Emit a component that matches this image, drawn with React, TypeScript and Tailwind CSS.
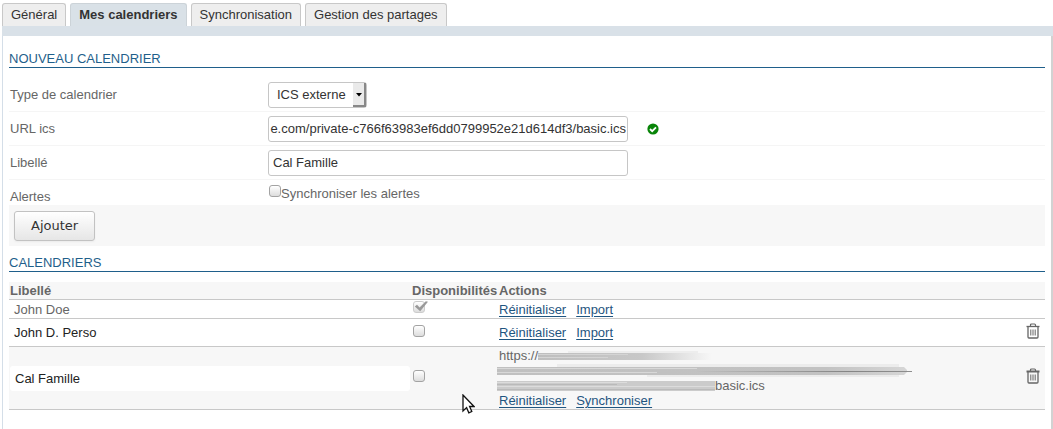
import type { ReactNode } from "react";

const tabs = ["Général", "Mes calendriers", "Synchronisation", "Gestion des partages"];

const fieldClass =
  "h-[26px] rounded-[3px] border border-[#c6c6c6] bg-white text-[13px] text-[#333] outline-none";

function SectionTitle({ children }: { children: ReactNode }) {
  return (
    <h2 className="h-[17px] border-b border-[#1f5f8b] text-[13px] leading-4 text-[#1f5f8b]">{children}</h2>
  );
}

function FormRow({ id, label, children }: { id: string; label: string; children: ReactNode }) {
  return (
    <div className="flex h-[34px] items-center border-b border-[#f5f5f5]">
      <label htmlFor={id} className="w-[259px] shrink-0 pl-px">
        {label}
      </label>
      {children}
    </div>
  );
}

function Checkbox({ id, label, checked = false }: { id: string; label?: string; checked?: boolean }) {
  return (
    <span className="relative block size-3">
      <input
        id={id}
        type="checkbox"
        aria-label={label}
        defaultChecked={checked}
        disabled={checked}
        className="block size-3 appearance-none rounded-[3px] border border-[#a3a3a3] bg-linear-to-b from-white to-[#dddddd] disabled:border-[#cccccc]"
      />
      {checked && (
        <svg viewBox="0 0 15 12" className="pointer-events-none absolute top-0 left-px h-3 w-[15px]" aria-hidden="true">
          <path d="M.8 5.6 3 3.8 5.6 6.4 11.8.2 14 .8 6.2 10.2Z" fill="#999" />
        </svg>
      )}
    </span>
  );
}

function TrashButton({ name, heavyLid = false }: { name: string; heavyLid?: boolean }) {
  return (
    <button type="button" aria-label={`Supprimer ${name}`} className="block">
      <svg viewBox="0 0 14 16" className="h-4 w-[14px]" fill="none" stroke="#666" aria-hidden="true">
        <path d={heavyLid ? "M.5 3.5h13" : "M.5 3.5h13"} strokeWidth={heavyLid ? 2 : 1.3} />
        <path d="M4.5 3V2q0-1 1-1h3q1 0 1 1v1" strokeWidth="1.2" />
        <path d="M2 4v10q0 1 1 1h8q1 0 1-1V4" strokeWidth="1.3" />
        <path d="M4.8 6.5v6M7 6.5v6M9.2 6.5v6" />
      </svg>
    </button>
  );
}

function ActionLinks({ names }: { names: string[] }) {
  return (
    <div className="flex gap-[10px]">
      {names.map((name) => (
        <a key={name} href="#" className="text-[#1f5580] underline underline-offset-2">
          {name}
        </a>
      ))}
    </div>
  );
}

function ShortSmudge() {
  return (
    <svg viewBox="0 0 174 10" className="h-[10px] w-[174px]" aria-hidden="true">
      <defs>
        <linearGradient id="fade" gradientUnits="userSpaceOnUse" x1="0" x2="174" y1="0" y2="0">
          <stop offset="0" stopColor="#bebebe" />
          <stop offset=".6" stopColor="#c8c8c8" />
          <stop offset="1" stopColor="#f7f7f7" />
        </linearGradient>
      </defs>
      <path d="M30 0h130v3H30Z" fill="#ededed" />
      <path d="M0 2h174v7H0Z" fill="url(#fade)" />
      <path d="M0 3.5h90M0 6.5h70" stroke="#d4d4d4" />
    </svg>
  );
}

function LongSmudge() {
  return (
    <svg viewBox="0 0 415 14" className="h-[14px] w-[415px]" aria-hidden="true">
      <defs>
        <linearGradient id="long-fade" gradientUnits="userSpaceOnUse" x1="0" x2="410" y1="0" y2="0">
          <stop offset="0" stopColor="#c0c0c0" />
          <stop offset=".8" stopColor="#c2c2c2" />
          <stop offset="1" stopColor="#d6d6d6" />
        </linearGradient>
        <linearGradient id="line-fade" gradientUnits="userSpaceOnUse" x1="200" x2="415" y1="0" y2="0">
          <stop offset="0" stopColor="#c0c0c0" />
          <stop offset=".7" stopColor="#858585" />
          <stop offset="1" stopColor="#8e8e8e" />
        </linearGradient>
      </defs>
      <path d="M60 0h342v13H150V10H60Z" fill="#ececec" />
      <path d="M0 3h407l3 3v2l-3 3H0Z" fill="url(#long-fade)" />
      <path d="M0 4.5h200M0 8.5h160" stroke="#d8d8d8" />
      <path d="M200 7h215v1H200Z" fill="url(#line-fade)" />
    </svg>
  );
}

function TailSmudge() {
  return (
    <svg viewBox="0 0 218 10" className="h-[10px] w-[218px]" aria-hidden="true">
      <path d="M0 0h218v10H0Z" fill="#cbcbcb" />
      <path d="M0 1.5h130M0 5.5h218" stroke="#dcdcdc" />
      <path d="M0 3.5h120M0 8.5h218" stroke="#bababa" />
    </svg>
  );
}

export default function App() {
  return (
    <div className="relative flex min-h-screen flex-col bg-white pl-[2px] font-['Liberation_Sans',Arial,sans-serif] text-[13px] leading-4 text-[#666]">
      <nav className="flex gap-1 pt-[3px]" aria-label="Paramètres">
        {tabs.map((tab, i) => (
          <button
            key={tab}
            type="button"
            aria-current={i === 1 ? "page" : undefined}
            className={
              i === 1
                ? "h-[23px] rounded-t-[3px] border border-b-0 border-[#ccd3d8] bg-[#d9e1e7] px-2 font-bold text-[#333]"
                : "h-[23px] rounded-t-[3px] border border-b-0 border-[#c8c8c8] bg-[#eeeeee] px-2 text-[#333]"
            }
          >
            {tab}
          </button>
        ))}
      </nav>
      <div className="h-[10px] bg-[#d9e1e8]" />
      <main className="flex-1 border-r-2 border-l border-r-[#d2d2d2] border-l-[#d4dee8] pr-[6px] pl-[6px]">
        <form className="pt-[15px]" onSubmit={(e) => e.preventDefault()}>
          <SectionTitle>NOUVEAU CALENDRIER</SectionTitle>
          <div className="pt-[10px]">
            <FormRow id="type" label="Type de calendrier">
              <div className="relative">
                <select id="type" className={`${fieldClass} w-[99px] appearance-none pl-2`}>
                  <option>ICS externe</option>
                </select>
                <svg viewBox="0 0 13 24" className="pointer-events-none absolute top-px right-px h-6 w-[13px]" aria-hidden="true">
                  <path d="M0 0h13v24H0z" fill="#eaeaea" />
                  <path d="M12 0v23H0" fill="none" stroke="#888" strokeWidth="2" />
                  <path d="M3 10h6L6 13.5Z" fill="#000" />
                </svg>
              </div>
            </FormRow>
            <FormRow id="url" label="URL ics">
              <input
                id="url"
                type="text"
                dir="rtl"
                defaultValue="e.com/private-c766f63983ef6dd0799952e21d614df3/basic.ics"
                className={`${fieldClass} w-[360px] px-px`}
              />
              <svg viewBox="0 0 12 12" className="ml-[19px] size-3" role="img" aria-label="Valide">
                <circle cx="6" cy="6" r="5.6" fill="#088408" />
                <path d="m3 6 2.2 2.2L9 4.4" fill="none" stroke="#fff" strokeWidth="1.8" />
              </svg>
            </FormRow>
            <FormRow id="label" label="Libellé">
              <input id="label" type="text" defaultValue="Cal Famille" className={`${fieldClass} w-[360px] px-1`} />
            </FormRow>
            <div className="flex h-[25px] items-end">
              <span className="w-[260px] shrink-0 pl-px">Alertes</span>
              <div className="flex h-5 items-start">
                <Checkbox id="alerts" />
                <label htmlFor="alerts" className="pt-px">
                  Synchroniser les alertes
                </label>
              </div>
            </div>
          </div>
          <div className="bg-[#f7f7f7] px-[5px] pt-[6px] pb-[5px]">
            <button
              type="submit"
              className="block h-[30px] rounded-[3px] border border-[#c2c2c2] bg-linear-to-b from-white to-[#e6e6e6] px-4 font-['DejaVu_Sans',sans-serif] text-[13px] text-[#333] shadow-xs"
            >
              Ajouter
            </button>
          </div>
        </form>
        <section className="pt-[9px]">
          <SectionTitle>CALENDRIERS</SectionTitle>
          <table className="mt-[10px] w-full table-fixed border-separate border-spacing-0 text-left [&_td]:border-b [&_td]:border-[#c8c8c8] [&_td]:p-0 [&_th]:border-b [&_th]:border-[#c8c8c8] [&_th]:p-0">
            <colgroup>
              <col className="w-[403px]" />
              <col className="w-[87px]" />
              <col />
              <col className="w-5" />
            </colgroup>
            <thead>
              <tr className="h-[18px] bg-[#f7f7f7]">
                <th>
                  <span className="pl-px">Libellé</span>
                </th>
                <th>Disponibilités</th>
                <th>Actions</th>
                <th aria-label="Supprimer" />
              </tr>
            </thead>
            <tbody>
              <tr className="h-[19px]">
                <td>
                  <div className="pt-px pl-[5px]">John Doe</div>
                </td>
                <td className="align-top">
                  <div className="pt-px pl-px">
                    <Checkbox id="doe" label="Disponibilités John Doe" checked />
                  </div>
                </td>
                <td>
                  <div className="pt-px">
                    <ActionLinks names={["Réinitialiser", "Import"]} />
                  </div>
                </td>
                <td />
              </tr>
              <tr className="h-7">
                <td>
                  <div className="pl-[5px] text-[#222]">John D. Perso</div>
                </td>
                <td>
                  <div className="pb-1 pl-px">
                    <Checkbox id="perso" label="Disponibilités John D. Perso" />
                  </div>
                </td>
                <td>
                  <ActionLinks names={["Réinitialiser", "Import"]} />
                </td>
                <td>
                  <div className="pb-1 pl-px">
                    <TrashButton name="John D. Perso" />
                  </div>
                </td>
              </tr>
              <tr className="h-[63px] bg-[#f7f7f7]">
                <td>
                  <div className="px-px">
                    <input
                      type="text"
                      aria-label="Libellé du calendrier"
                      defaultValue="Cal Famille"
                      className="block h-[25px] w-[400px] rounded-[3px] bg-white px-[5px] text-[#222] outline-none"
                    />
                  </div>
                </td>
                <td>
                  <div className="pb-1 pl-px">
                    <Checkbox id="famille" label="Disponibilités Cal Famille" />
                  </div>
                </td>
                <td>
                  <div className="flex h-4 items-center pt-px">
                    <span>https://</span>
                    <ShortSmudge />
                  </div>
                  <div className="-ml-[2px] flex h-[15px] items-center">
                    <LongSmudge />
                  </div>
                  <div className="-ml-[2px] flex h-[15px] items-center">
                    <TailSmudge />
                    <span>basic.ics</span>
                  </div>
                  <ActionLinks names={["Réinitialiser", "Synchroniser"]} />
                </td>
                <td>
                  <div className="pb-1 pl-px">
                    <TrashButton name="Cal Famille" heavyLid />
                  </div>
                </td>
              </tr>
            </tbody>
          </table>
        </section>
      </main>
      <svg viewBox="0 0 13 20" className="pointer-events-none absolute top-[394px] left-[462px] h-5 w-[13px]" aria-hidden="true">
        <path d="M1 1v16l3.6-3.4 2.2 5.2 3-1.3-2.2-5H12Z" fill="#fff" stroke="#111" strokeWidth="1.3" />
      </svg>
    </div>
  );
}
